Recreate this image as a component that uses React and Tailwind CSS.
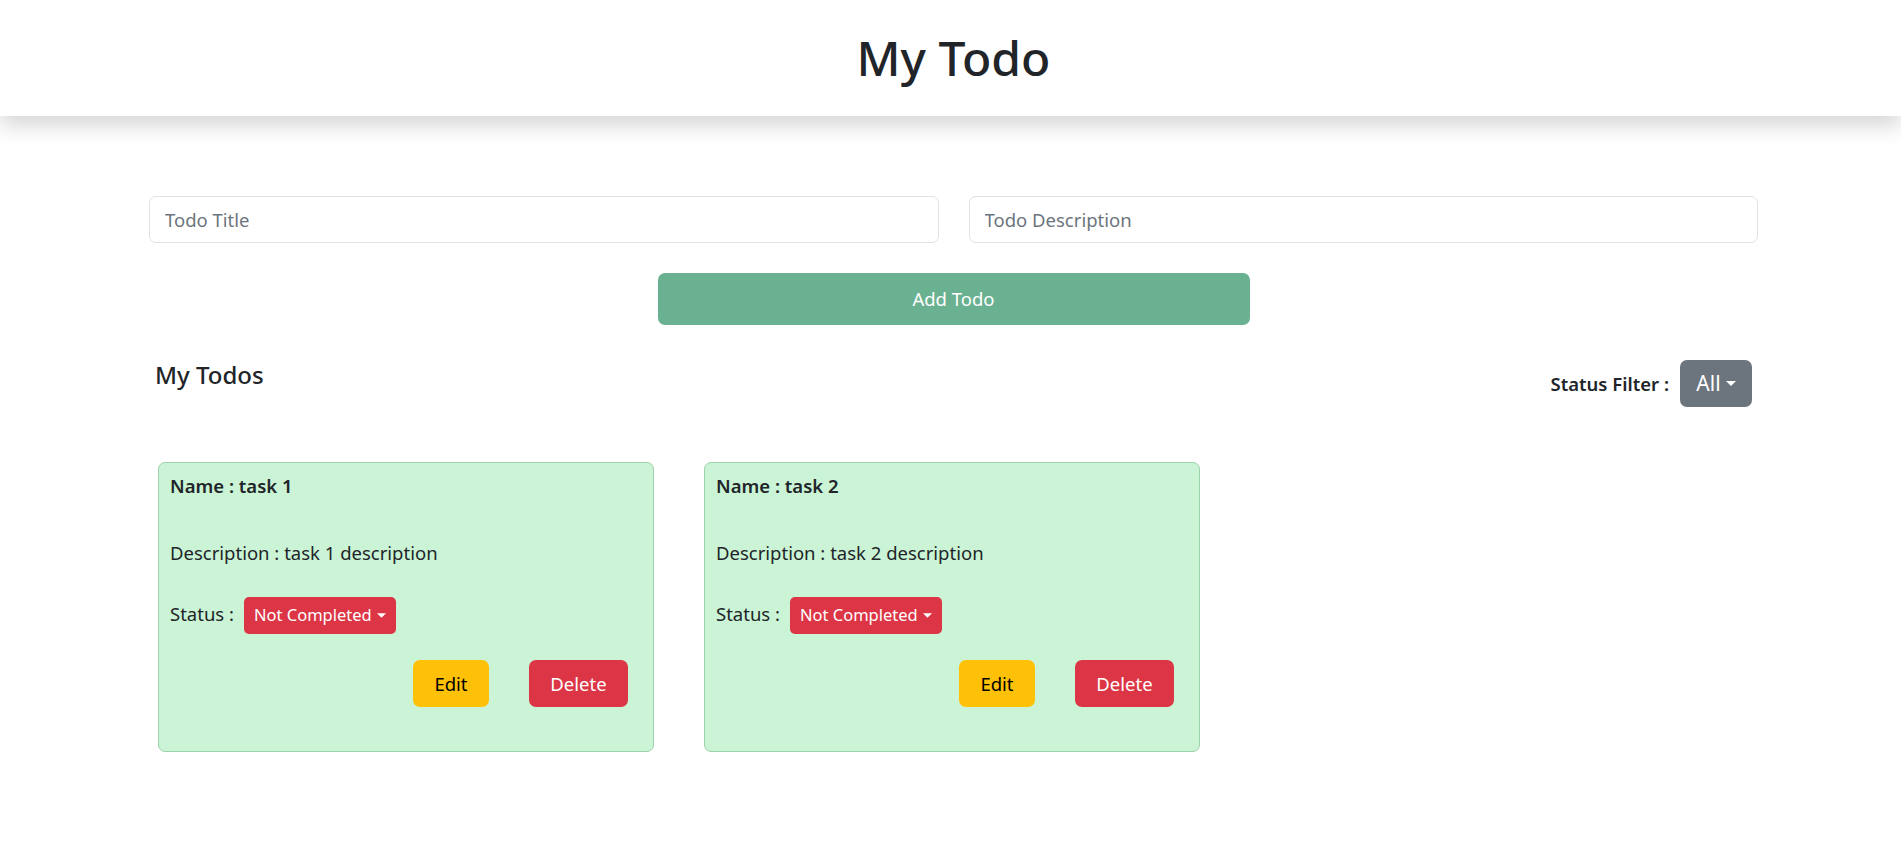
import React, { useState } from 'react';

const initialTodos = [
  { id: 1, name: 'task 1', description: 'task 1 description', status: 'Not Completed' },
  { id: 2, name: 'task 2', description: 'task 2 description', status: 'Not Completed' },
];

const Caret = ({ className }) => (
  <svg className={className} viewBox="0 0 10 5" fill="currentColor">
    <path d="M0 0 L10 0 L5 5 Z" />
  </svg>
);

const TodoCard = ({ todo }) => (
  <div className="w-[496px] h-[290px] border border-[#9dd1ab] bg-[#caf4d5] rounded-[7px] px-[11px] pt-[8px] flex flex-col">
    <div className="font-semibold leading-[29px]">Name : {todo.name}</div>
    <div className="mt-[38px] leading-[29px]">Description : {todo.description}</div>
    <div className="mt-[30px] flex items-start gap-[10px]">
      <span className="mt-[2px] leading-[29px]">Status :</span>
      <button className="h-[37px] px-[10px] rounded-[5px] bg-[#dc3545] text-white text-[16.5px] flex items-center gap-[5px]">
        {todo.status}
        <Caret className="w-[9px] h-[5px]" />
      </button>
    </div>
    <div className="mt-[26px] flex justify-end gap-[40px] pr-[14px]">
      <button className="h-[47px] w-[76px] rounded-[7px] bg-[#ffc107] text-black">Edit</button>
      <button className="h-[47px] w-[99px] rounded-[7px] bg-[#dc3545] text-white">Delete</button>
    </div>
  </div>
);

export default function App() {
  const [todos] = useState(initialTodos);
  const [title, setTitle] = useState('');
  const [description, setDescription] = useState('');

  return (
    <div className="min-h-screen bg-white text-[#212529] text-[18.5px] font-['Noto_Sans',sans-serif]">
      <header className="relative z-10 h-[116px] bg-white shadow-[0_10px_20px_rgba(0,0,0,0.16)] pl-[149px] pr-[143px] flex items-center justify-center">
        <h1 className="text-[48px] font-medium leading-none">My Todo</h1>
      </header>

      <main className="pl-[149px] pr-[143px] pt-[80px]">
        <div className="grid grid-cols-2 gap-[30px]">
          <input
            value={title}
            onChange={(e) => setTitle(e.target.value)}
            placeholder="Todo Title"
            className="h-[47px] border border-[#dee2e6] rounded-[7px] px-[15px] outline-none placeholder:text-[#6c757d]"
          />
          <input
            value={description}
            onChange={(e) => setDescription(e.target.value)}
            placeholder="Todo Description"
            className="h-[47px] border border-[#dee2e6] rounded-[7px] px-[15px] outline-none placeholder:text-[#6c757d]"
          />
        </div>

        <div className="mt-[30px] flex justify-center">
          <button className="w-[592px] h-[52px] rounded-[7px] bg-[#69b190] text-white">Add Todo</button>
        </div>

        <div className="mt-[35px] px-[6px] flex justify-between items-start">
          <h5 className="text-[24px] leading-[29px] font-medium">My Todos</h5>
          <div className="flex items-center gap-[11px]">
            <span className="font-semibold">Status Filter :</span>
            <button className="h-[47px] w-[72px] rounded-[7px] bg-[#6c757d] text-white text-[21px] flex items-center justify-center gap-[5px]">
              All
              <Caret className="w-[10px] h-[5px]" />
            </button>
          </div>
        </div>

        <div className="mt-[55px] pl-[9px] flex gap-[50px]">
          {todos.map((todo) => (
            <TodoCard key={todo.id} todo={todo} />
          ))}
        </div>
      </main>
    </div>
  );
}
